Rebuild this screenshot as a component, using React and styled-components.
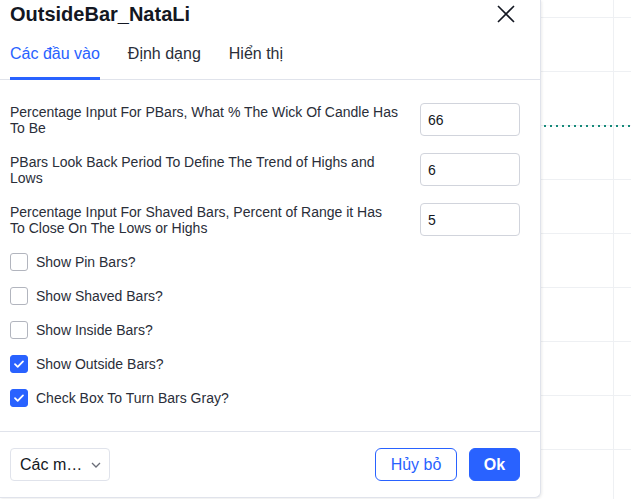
import React from "react";
import styled, { createGlobalStyle } from "styled-components";

const Global = createGlobalStyle`
  html, body { margin: 0; padding: 0; background: #fff; }
  body { font-family: "Liberation Sans", Arial, sans-serif; color: #131722; }
  * { box-sizing: border-box; }
`;

const Page = styled.div`
  position: relative;
  width: 631px;
  height: 499px;
  overflow: hidden;
  background-color: #fff;
  background-image:
    linear-gradient(to right, transparent 613px, #eef0f3 613px, #eef0f3 614px, transparent 614px),
    linear-gradient(to bottom, #eef0f3 1px, transparent 1px);
  background-size: 100% 100%, 100% 54px;
  background-position: 0 0, 0 17px;
  background-repeat: no-repeat, repeat-y;
`;

const DottedLine = styled.div`
  position: absolute;
  left: 541px;
  right: 0;
  top: 125px;
  height: 2px;
  background-image: linear-gradient(to right, #15897a 2px, transparent 2px);
  background-size: 6px 2px;
  background-position: 3px 0;
`;

const Dialog = styled.div`
  position: relative;
  z-index: 1;
  width: 541px;
  height: 498px;
  background: #fff;
  border-right: 1px solid #e0e3eb;
  border-bottom: 1px solid #e0e3eb;
  border-bottom-right-radius: 6px;
  box-shadow: 1px 1px 3px rgba(0, 0, 0, 0.08);
  display: flex;
  flex-direction: column;
`;

const Header = styled.div`
  height: 26px;
  display: flex;
  align-items: center;
  justify-content: space-between;
  padding: 0 24px 0 10px;
`;

const Title = styled.div`
  font-size: 20px;
  font-weight: 700;
  color: #131722;
  line-height: 24px;
  margin-top: 1px;
`;

const CloseButton = styled.button`
  border: none;
  background: none;
  padding: 0;
  width: 20px;
  height: 20px;
  display: flex;
  align-items: center;
  justify-content: center;
  cursor: pointer;
  margin-top: 1px;
`;

const Tabs = styled.div`
  display: flex;
  gap: 28px;
  padding: 0 10px;
  border-bottom: 1px solid #e0e3eb;
  height: 54px;
  align-items: stretch;
`;

const Tab = styled.div`
  display: flex;
  align-items: center;
  padding-top: 4px;
  font-size: 16px;
  color: ${(p) => (p.$active ? "#2962ff" : "#2a2e39")};
  border-bottom: 3px solid ${(p) => (p.$active ? "#2962ff" : "transparent")};
  margin-bottom: -1px;
`;

const Body = styled.div`
  flex: 1;
  display: flex;
  flex-direction: column;
  gap: 16px;
  padding: 23px 20px 0 10px;
`;

const InputRow = styled.div`
  display: grid;
  grid-template-columns: 1fr 100px;
  column-gap: 20px;
  height: 34px;
  align-items: start;
`;

const Label = styled.div`
  font-size: 14px;
  line-height: 16px;
  color: #2a2e39;
  padding-top: 1px;
`;

const NumberInput = styled.input`
  width: 100px;
  height: 33px;
  border: 1px solid #d1d4dc;
  border-radius: 4px;
  padding: 0 0 0 7px;
  font-family: "Liberation Sans", Arial, sans-serif;
  font-size: 14px;
  color: #131722;
  outline: none;
  background: #fff;
`;

const CheckRow = styled.label`
  display: flex;
  align-items: center;
  gap: 8px;
  height: 18px;
  font-size: 14px;
  color: #2a2e39;
`;

const Box = styled.span`
  width: 18px;
  height: 18px;
  border-radius: 3px;
  border: 1px solid ${(p) => (p.$checked ? "#2962ff" : "#b2b5be")};
  background: ${(p) => (p.$checked ? "#2962ff" : "#fff")};
  display: flex;
  align-items: center;
  justify-content: center;
  flex: none;
`;

const Footer = styled.div`
  border-top: 1px solid #e0e3eb;
  display: flex;
  align-items: center;
  justify-content: space-between;
  padding: 16px 20px 16px 10px;
`;

const Select = styled.div`
  width: 100px;
  height: 33px;
  border: 1px solid #e0e3eb;
  border-radius: 4px;
  display: flex;
  align-items: center;
  justify-content: space-between;
  padding: 0 8px 0 9px;
  font-size: 16px;
  color: #131722;
`;

const Buttons = styled.div`
  display: flex;
  gap: 12px;
`;

const Button = styled.button`
  height: 33px;
  padding: 0;
  width: ${(p) => (p.$primary ? "51px" : "82px")};
  border-radius: 6px;
  border: 1px solid #2962ff;
  background: ${(p) => (p.$primary ? "#2962ff" : "#fff")};
  color: ${(p) => (p.$primary ? "#fff" : "#2962ff")};
  font-family: "Liberation Sans", Arial, sans-serif;
  font-size: 16px;
  font-weight: ${(p) => (p.$primary ? 700 : 400)};
  cursor: pointer;
`;

const Check = () => (
  <svg width="12" height="10" viewBox="0 0 12 10">
    <path d="M2 5.2 L4.7 7.8 L10 2.4" fill="none" stroke="#fff" strokeWidth="1.8" strokeLinecap="round" strokeLinejoin="round" />
  </svg>
);

const inputs = [
  ["Percentage Input For PBars, What % The Wick Of Candle Has To Be", "66"],
  ["PBars Look Back Period To Define The Trend of Highs and Lows", "6"],
  ["Percentage Input For Shaved Bars, Percent of Range it Has To Close On The Lows or Highs", "5"],
];

const checks = [
  ["Show Pin Bars?", false],
  ["Show Shaved Bars?", false],
  ["Show Inside Bars?", false],
  ["Show Outside Bars?", true],
  ["Check Box To Turn Bars Gray?", true],
];

export default function App() {
  return (
    <>
      <Global />
      <Page>
        <DottedLine />
        <Dialog>
          <Header>
            <Title>OutsideBar_NataLi</Title>
            <CloseButton aria-label="close">
              <svg width="18" height="18" viewBox="0 0 18 18">
                <path d="M1 1 L17 17 M17 1 L1 17" stroke="#131722" strokeWidth="1.6" fill="none" />
              </svg>
            </CloseButton>
          </Header>
          <Tabs>
            <Tab $active>Các đầu vào</Tab>
            <Tab>Định dạng</Tab>
            <Tab>Hiển thị</Tab>
          </Tabs>
          <Body>
            {inputs.map(([label, val]) => (
              <InputRow key={label}>
                <Label>{label}</Label>
                <NumberInput defaultValue={val} />
              </InputRow>
            ))}
            {checks.map(([label, on]) => (
              <CheckRow key={label}>
                <Box $checked={on}>{on && <Check />}</Box>
                {label}
              </CheckRow>
            ))}
          </Body>
          <Footer>
            <Select>
              <span>Các m…</span>
              <svg width="10" height="6" viewBox="0 0 10 6">
                <path d="M1 1 L5 5 L9 1" fill="none" stroke="#6a6d78" strokeWidth="1.3" />
              </svg>
            </Select>
            <Buttons>
              <Button>Hủy bỏ</Button>
              <Button $primary>Ok</Button>
            </Buttons>
          </Footer>
        </Dialog>
      </Page>
    </>
  );
}
